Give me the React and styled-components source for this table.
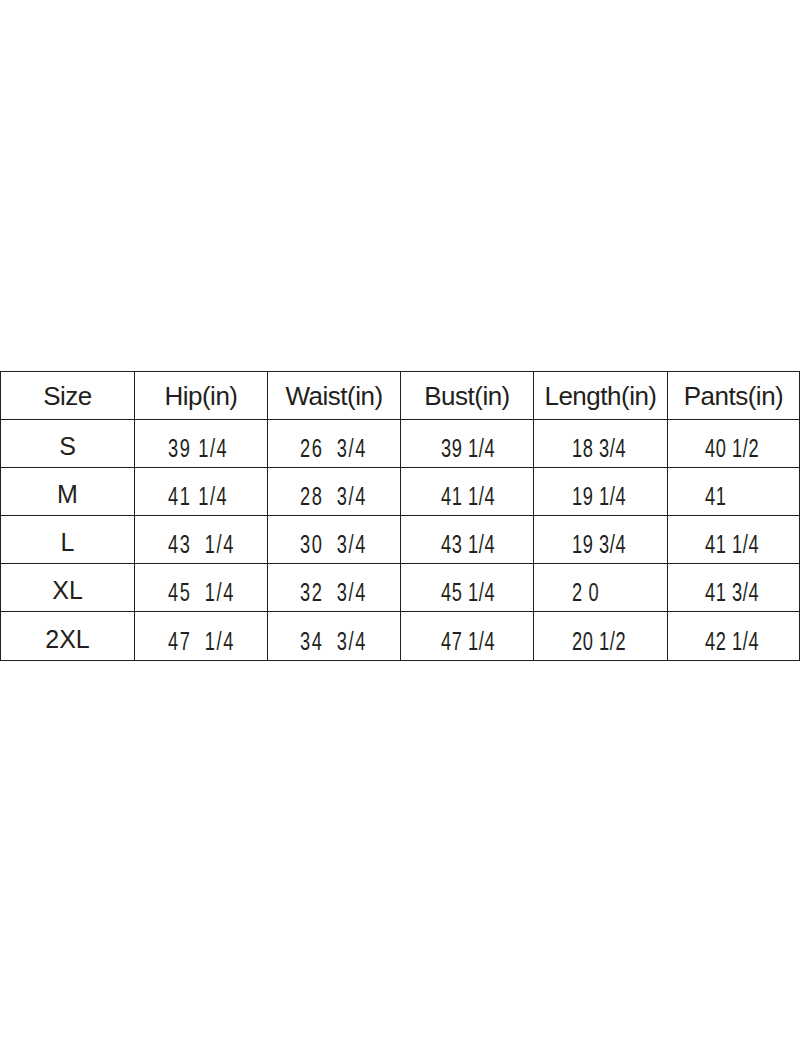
import React from "react";
import styled, { createGlobalStyle } from "styled-components";

const GlobalStyle = createGlobalStyle`
  html, body {
    margin: 0;
    padding: 0;
    background: #ffffff;
  }
  body {
    font-family: "Liberation Sans", Arial, sans-serif;
    color: #231f20;
  }
`;

const Page = styled.div`
  width: 800px;
  height: 1050px;
  padding-top: 371px;
  box-sizing: border-box;
  background: #ffffff;
`;

const Grid = styled.div`
  display: grid;
  grid-template-columns: 133px 132px 132px 132px 133px 131px;
  grid-template-rows: repeat(5, 47px) 48px;
  gap: 1px;
  width: 800px;
  box-sizing: border-box;
  border: 1px solid #231f20;
  background: #231f20;
`;

const Cell = styled.div`
  background: #ffffff;
  display: flex;
  align-items: center;
  justify-content: ${(p) => (p.$left ? "flex-start" : "center")};
  padding-left: ${(p) => p.$pad || 0}px;
  line-height: 1;
  color: #231f20;
  white-space: pre;
`;

const Head = styled(Cell)`
  font-size: 26px;
  letter-spacing: -0.5px;
`;

const SizeCell = styled(Cell)`
  font-size: 25px;
  padding-top: 6px;
  box-sizing: border-box;
`;

const Narrow = styled.span`
  display: inline-block;
  font-size: 25px;
  letter-spacing: ${(p) => p.$spacing}px;
  transform: translateY(5px) scaleX(0.73);
  transform-origin: left center;
`;

const headers = ["Size", "Hip(in)", "Waist(in)", "Bust(in)", "Length(in)", "Pants(in)"];

// left offset and letter spacing of the values in each column
const cols = [
  null,
  { pad: 33, spacing: 2.2 },
  { pad: 32, spacing: 2.2 },
  { pad: 40, spacing: 0.8 },
  { pad: 38, spacing: 0.8 },
  { pad: 37, spacing: 0.8 },
];

const rows = [
  ["S", "39 1/4", "26  3/4", "39 1/4", "18 3/4", "40 1/2"],
  ["M", "41 1/4", "28  3/4", "41 1/4", "19 1/4", "41"],
  ["L", "43  1/4", "30  3/4", "43 1/4", "19 3/4", "41 1/4"],
  ["XL", "45  1/4", "32  3/4", "45 1/4", "2 0", "41 3/4"],
  ["2XL", "47  1/4", "34  3/4", "47 1/4", "20 1/2", "42 1/4"],
];

export default function App() {
  return (
    <>
      <GlobalStyle />
      <Page>
        <Grid>
          {headers.map((h) => (
            <Head key={h}>{h}</Head>
          ))}
          {rows.map((row) =>
            row.map((v, i) =>
              i === 0 ? (
                <SizeCell key={row[0] + i}>{v}</SizeCell>
              ) : (
                <Cell key={row[0] + i} $left $pad={cols[i].pad}>
                  <Narrow $spacing={cols[i].spacing}>{v}</Narrow>
                </Cell>
              )
            )
          )}
        </Grid>
      </Page>
    </>
  );
}
